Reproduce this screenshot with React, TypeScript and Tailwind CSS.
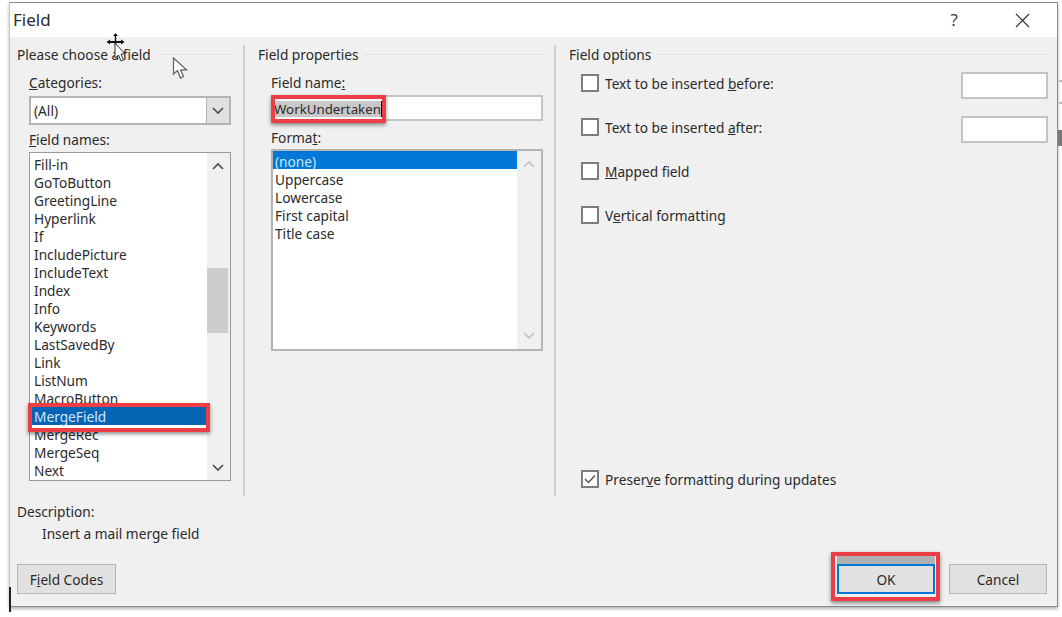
import { ReactNode } from "react";

const fieldNames = [
  "Fill-in", "GoToButton", "GreetingLine", "Hyperlink", "If", "IncludePicture",
  "IncludeText", "Index", "Info", "Keywords", "LastSavedBy", "Link", "ListNum",
  "MacroButton", "MergeField", "MergeRec", "MergeSeq", "Next",
];
const formats = ["Uppercase", "Lowercase", "First capital", "Title case"];

const Chevron = ({ up, light }: { up?: boolean; light?: boolean }) => (
  <svg width="12" height="8" viewBox="0 0 12 8" fill="none" stroke={light ? "#c4c4c4" : "#505050"} strokeWidth="1.7">
    <path d={up ? "M1 7 L6 2 L11 7" : "M1 1 L6 6 L11 1"} />
  </svg>
);

// Group caption followed by the thin etched line
const GroupHead = ({ title }: { title: string }) => (
  <div className="flex h-[18px] items-center gap-[6px]">
    <span className="mt-[2px] whitespace-nowrap">{title}</span>
    <div className="h-px flex-1 bg-[#e2e2e2]" />
  </div>
);

const Check = ({ label, checked }: { label: ReactNode; checked?: boolean }) => (
  <div className="flex h-[22px] items-center gap-[6px]">
    <div className="flex h-[18px] w-[18px] items-center justify-center border-2 border-[#7d7d7d] bg-white">
      {checked && (
        <svg width="14" height="14" viewBox="0 0 14 14" fill="none" stroke="#555" strokeWidth="1.5">
          <path d="M2 7 L5.5 10.5 L12 3.5" />
        </svg>
      )}
    </div>
    <span className="mt-[2px] whitespace-nowrap">{label}</span>
  </div>
);

const Redbox = ({ className }: { className: string }) => (
  <div className={`pointer-events-none absolute border-[4px] border-[#ee3e45] shadow-[0_2px_4px_rgba(0,0,0,0.45)] ${className}`} />
);

export default function App() {
  return (
    <div className="relative h-[617px] w-[1062px] overflow-hidden bg-white pl-[9px] pt-[2px] text-[13.7px] leading-[20px] text-[#2b2b2b] font-['Noto_Sans',sans-serif]">
      <div className="flex h-[605px] w-[1049px] flex-col border border-[#8c8c8c] border-l-[#c8c8c8] shadow-[0_2px_3px_rgba(0,0,0,0.3)]">
        {/* Title bar */}
        <div className="flex h-[34px] shrink-0 items-center bg-white pl-[3px] text-[17px]">
          <span className="flex-1">Field</span>
          <span className="mr-[57px] text-[17px] text-[#444]">?</span>
          <svg className="mr-[27px]" width="15" height="15" viewBox="0 0 15 15" stroke="#333" strokeWidth="1.2">
            <path d="M1 1 L14 14 M14 1 L1 14" />
          </svg>
        </div>

        <div className="flex flex-1 flex-col bg-[#f0f0f0] pl-[7px] pr-[9px] pt-[8px]">
          <div className="flex h-[451px]">
            {/* Left group */}
            <div className="w-[214px] shrink-0">
              <GroupHead title="Please choose a field" />
              <div className="pl-[12px]">
                <div className="mt-[10px] h-[18px]"><span className="underline">C</span>ategories:</div>
                <div className="mt-[5px] flex h-[29px] border-2 border-[#b4b4b4] bg-white">
                  <div className="flex flex-1 items-center pl-[3px]">(All)</div>
                  <div className="flex w-[23px] items-center justify-center border-l border-[#b4b4b4] bg-[#e1e1e1]"><Chevron /></div>
                </div>
                <div className="mt-[5px] h-[18px]"><span className="underline">F</span>ield names:</div>
                <div className="mt-[4px] flex h-[329px] border border-[#9a9a9a] bg-white">
                  <div className="flex-1 pl-px pt-[2px]">
                    {fieldNames.map((name) => name === "MergeField" ? (
                      <div key={name} className="relative h-[18px] bg-[#0564b4] pl-[3px] text-[#cfe6fa] shadow-[0_1px_0_#fff]">
                        {name}
                        <Redbox className="-bottom-[7px] -left-[3px] -right-[3px] -top-[4px]" />
                      </div>
                    ) : (
                      <div key={name} className="h-[18px] pl-[3px]">{name}</div>
                    ))}
                  </div>
                  <div className="flex w-[23px] flex-col bg-[#f0f0f0] pr-[2px]">
                    <div className="flex h-[25px] items-center justify-center"><Chevron up /></div>
                    <div className="mt-[90px] h-[65px] bg-[#cdcdcd]" />
                    <div className="mt-auto flex h-[25px] items-center justify-center"><Chevron /></div>
                  </div>
                </div>
              </div>
            </div>

            <div className="ml-[12px] w-[2px] bg-[#cfcfcf]" />

            {/* Middle group */}
            <div className="ml-[13px] w-[285px] shrink-0">
              <GroupHead title="Field properties" />
              <div className="pl-[13px]">
                <div className="mt-[10px] h-[18px]">Field name<span className="underline">:</span></div>
                <div className="relative mt-[4px] flex h-[26px] items-center border-2 border-[#c4c4c4] bg-white pl-[1px] pt-px">
                  <span className="bg-[#c8c8c8] text-[13.3px] leading-[16px]">WorkUndertaken</span>
                  <div className="h-[16px] w-px bg-black" />
                  <Redbox className="-left-[2px] -top-[2px] h-[28px] w-[115px]" />
                </div>
                <div className="mt-[7px] h-[18px]">Forma<span className="underline">t</span>:</div>
                <div className="mt-[3px] flex h-[202px] border-2 border-[#b4b4b4] bg-white">
                  <div className="flex-1 leading-[22px]">
                    <div className="h-[18px] bg-[#0078d7] pl-[2px] text-[#cfe6fa]">(none)</div>
                    {formats.map((f) => (
                      <div key={f} className="h-[18px] pl-[2px]">{f}</div>
                    ))}
                  </div>
                  <div className="flex w-[24px] flex-col bg-[#f0f0f0]">
                    <div className="flex h-[26px] items-center justify-center"><Chevron up light /></div>
                    <div className="mt-auto flex h-[26px] items-center justify-center"><Chevron light /></div>
                  </div>
                </div>
              </div>
            </div>

            <div className="ml-[11px] w-[2px] bg-[#cfcfcf]" />

            {/* Right group */}
            <div className="ml-[13px] flex flex-1 flex-col">
              <GroupHead title="Field options" />
              <div className="mt-[9px] pl-[12px]">
                <div className="flex h-[44px] items-start justify-between">
                  <Check label={<>Text to be inserted <span className="underline">b</span>efore:</>} />
                  <div className="h-[27px] w-[87px] border-2 border-[#c4c4c4] bg-white" />
                </div>
                <div className="flex h-[44px] items-start justify-between">
                  <Check label={<>Text to be inserted <span className="underline">a</span>fter:</>} />
                  <div className="h-[27px] w-[87px] border-2 border-[#c4c4c4] bg-white" />
                </div>
                <div className="h-[44px]"><Check label={<><span className="underline">M</span>apped field</>} /></div>
                <div className="h-[44px]"><Check label={<>V<span className="underline">e</span>rtical formatting</>} /></div>
              </div>
              <div className="mb-[6px] mt-auto pl-[12px]">
                <Check checked label={<>Preser<span className="underline">v</span>e formatting during updates</>} />
              </div>
            </div>
          </div>

          {/* Description */}
          <div className="mt-[6px] h-[18px]">Description:</div>
          <div className="mt-[4px] h-[18px] pl-[25px]">Insert a mail merge field</div>

          {/* Buttons */}
          <div className="mt-[22px] flex items-start">
            <button className="h-[30px] w-[99px] border border-[#b4b4b4] bg-[#e1e1e1] pt-px">F<span className="underline">i</span>eld Codes</button>
            <div className="relative ml-auto mr-[14px] h-[30px] w-[98px]">
              <div className="absolute -top-[8px] left-0 h-[8px] w-full bg-[#b0b0b0]" />
              <button className="h-full w-full border-2 border-[#0078d7] bg-[#e1e1e1] pt-px">OK</button>
              <Redbox className="-bottom-[7px] -left-[6px] -right-[5px] -top-[12px]" />
            </div>
            <button className="mr-[1px] h-[30px] w-[98px] border border-[#b4b4b4] bg-[#e1e1e1] pt-px">Cancel</button>
          </div>
        </div>
      </div>

      {/* Stray bits of the screenshot: text caret and window edge behind the dialog */}
      <div className="absolute left-[9px] top-[587px] h-[25px] w-[2px] bg-[#222]" />
      <div className="absolute left-[1059px] top-[80px] h-[2px] w-[3px] bg-[#bbb]" />
      <div className="absolute left-[1059px] top-[102px] h-[2px] w-[3px] bg-[#bbb]" />
      <div className="absolute left-[1058px] top-[130px] h-[16px] w-[4px] bg-[#777]" />

      {/* Mouse cursors */}
      <svg className="absolute left-[105px] top-[32px]" width="22" height="32" viewBox="0 0 22 32">
        <path d="M10.5 1 L13 4 H11.2 V9 H16 V7.4 L19.5 10 L16 12.6 V11 H11.2 V14 H9.8 V11 H5 V12.6 L1.5 10 L5 7.4 V9 H9.8 V4 H8 Z" fill="#111" />
        <path d="M10 11 L10 26 L13.5 23 L16 29 L18.5 28 L16 22 L20 22 Z" fill="#fff" stroke="#333" strokeWidth="1" />
      </svg>
      <svg className="absolute left-[172px] top-[57px]" width="18" height="23" viewBox="0 0 18 23">
        <path d="M1.5 1 L1.5 17 L5.5 13.5 L8.5 21 L11.5 19.5 L8.7 12.8 L14.5 12.8 Z" fill="#fff" stroke="#666" strokeWidth="1.3" />
      </svg>
    </div>
  );
}
